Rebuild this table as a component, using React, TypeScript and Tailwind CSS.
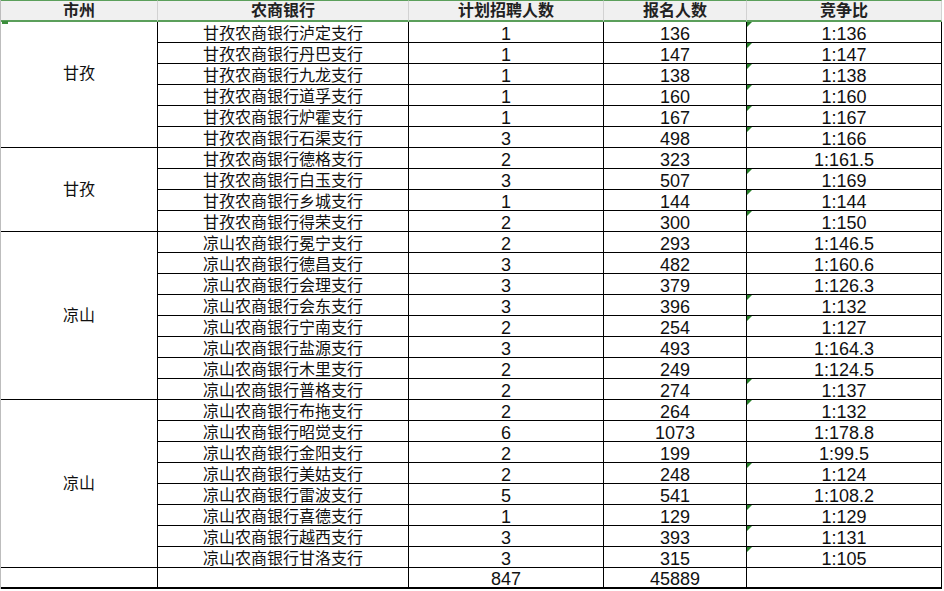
import React from 'react';

type Row = { bank: string; plan: number; applied: number; ratio: string };
type Group = { city: string; span: string; rows: Row[]; lift?: boolean };

const groups: Group[] = [
  {
    city: '甘孜',
    span: 'row-span-6',
    lift: true,
    rows: [
      { bank: '甘孜农商银行泸定支行', plan: 1, applied: 136, ratio: '1:136' },
      { bank: '甘孜农商银行丹巴支行', plan: 1, applied: 147, ratio: '1:147' },
      { bank: '甘孜农商银行九龙支行', plan: 1, applied: 138, ratio: '1:138' },
      { bank: '甘孜农商银行道孚支行', plan: 1, applied: 160, ratio: '1:160' },
      { bank: '甘孜农商银行炉霍支行', plan: 1, applied: 167, ratio: '1:167' },
      { bank: '甘孜农商银行石渠支行', plan: 3, applied: 498, ratio: '1:166' },
    ],
  },
  {
    city: '甘孜',
    span: 'row-span-4',
    rows: [
      { bank: '甘孜农商银行德格支行', plan: 2, applied: 323, ratio: '1:161.5' },
      { bank: '甘孜农商银行白玉支行', plan: 3, applied: 507, ratio: '1:169' },
      { bank: '甘孜农商银行乡城支行', plan: 1, applied: 144, ratio: '1:144' },
      { bank: '甘孜农商银行得荣支行', plan: 2, applied: 300, ratio: '1:150' },
    ],
  },
  {
    city: '凉山',
    span: 'row-span-8',
    rows: [
      { bank: '凉山农商银行冕宁支行', plan: 2, applied: 293, ratio: '1:146.5' },
      { bank: '凉山农商银行德昌支行', plan: 3, applied: 482, ratio: '1:160.6' },
      { bank: '凉山农商银行会理支行', plan: 3, applied: 379, ratio: '1:126.3' },
      { bank: '凉山农商银行会东支行', plan: 3, applied: 396, ratio: '1:132' },
      { bank: '凉山农商银行宁南支行', plan: 2, applied: 254, ratio: '1:127' },
      { bank: '凉山农商银行盐源支行', plan: 3, applied: 493, ratio: '1:164.3' },
      { bank: '凉山农商银行木里支行', plan: 2, applied: 249, ratio: '1:124.5' },
      { bank: '凉山农商银行普格支行', plan: 2, applied: 274, ratio: '1:137' },
    ],
  },
  {
    city: '凉山',
    span: 'row-span-8',
    rows: [
      { bank: '凉山农商银行布拖支行', plan: 2, applied: 264, ratio: '1:132' },
      { bank: '凉山农商银行昭觉支行', plan: 6, applied: 1073, ratio: '1:178.8' },
      { bank: '凉山农商银行金阳支行', plan: 2, applied: 199, ratio: '1:99.5' },
      { bank: '凉山农商银行美姑支行', plan: 2, applied: 248, ratio: '1:124' },
      { bank: '凉山农商银行雷波支行', plan: 5, applied: 541, ratio: '1:108.2' },
      { bank: '凉山农商银行喜德支行', plan: 1, applied: 129, ratio: '1:129' },
      { bank: '凉山农商银行越西支行', plan: 3, applied: 393, ratio: '1:131' },
      { bank: '凉山农商银行甘洛支行', plan: 3, applied: 315, ratio: '1:105' },
    ],
  },
];

const headers = ['市州', '农商银行', '计划招聘人数', '报名人数', '竞争比'];

// plain data cell, text sits low like in the spreadsheet
const cell = 'relative border-r border-b border-black flex items-center justify-center pt-[3px] leading-[16px]';
const num = 'text-[18px]';

// the little "number stored as text" marker in the corner
const Flag: React.FC = () => (
  <span className="absolute top-0 left-0 w-0 h-0 border-t-[5px] border-t-[#27802a] border-r-[5px] border-r-transparent" />
);

export default function App() {
  return (
    <div className="w-[944px] h-[591px] bg-white overflow-hidden text-[#111] text-[16px] font-['Liberation_Sans','Noto_Sans_CJK_SC',sans-serif]">
      <div className="w-[943px] border-l border-l-[#bdbdbd] grid grid-cols-[157px_251px_195px_143px_195px] grid-rows-[22px] auto-rows-[21px]">
        {/* Header */}
        {headers.map((h) => (
          <div
            key={h}
            className="flex items-center justify-center bg-[#f0f0f0] border-t border-t-[#5b9f5b] border-b-2 border-b-[#5b9f5b] border-r border-r-[#d2d2d2] font-bold text-[#222] leading-[18px]"
          >
            {h}
          </div>
        ))}

        {/* Body */}
        {groups.map((g, gi) => (
          <React.Fragment key={gi}>
            <div className={`${g.span} relative border-r border-b border-black flex items-center justify-center ${g.lift ? 'pb-[21px]' : ''}`}>
              {g.lift && <span className="absolute -top-[1px] left-[1px] w-[6px] h-[3px] bg-[#3d8f3d]" />}
              {g.city}
            </div>
            {g.rows.map((r) => (
              <React.Fragment key={r.bank}>
                <div className={cell}>{r.bank}</div>
                <div className={`${cell} ${num}`}>{r.plan}</div>
                <div className={`${cell} ${num}`}>{r.applied}</div>
                <div className={`${cell} ${num}`}>
                  {!r.ratio.includes('.') && <Flag />}
                  {r.ratio}
                </div>
              </React.Fragment>
            ))}
          </React.Fragment>
        ))}

        {/* Totals */}
        <div className="border-r border-b-2 border-black" />
        <div className="border-r border-b-2 border-black" />
        <div className={`${cell} ${num} border-b-2`}>847</div>
        <div className={`${cell} ${num} border-b-2`}>45889</div>
        <div className="border-r border-b-2 border-black" />
      </div>
    </div>
  );
}
